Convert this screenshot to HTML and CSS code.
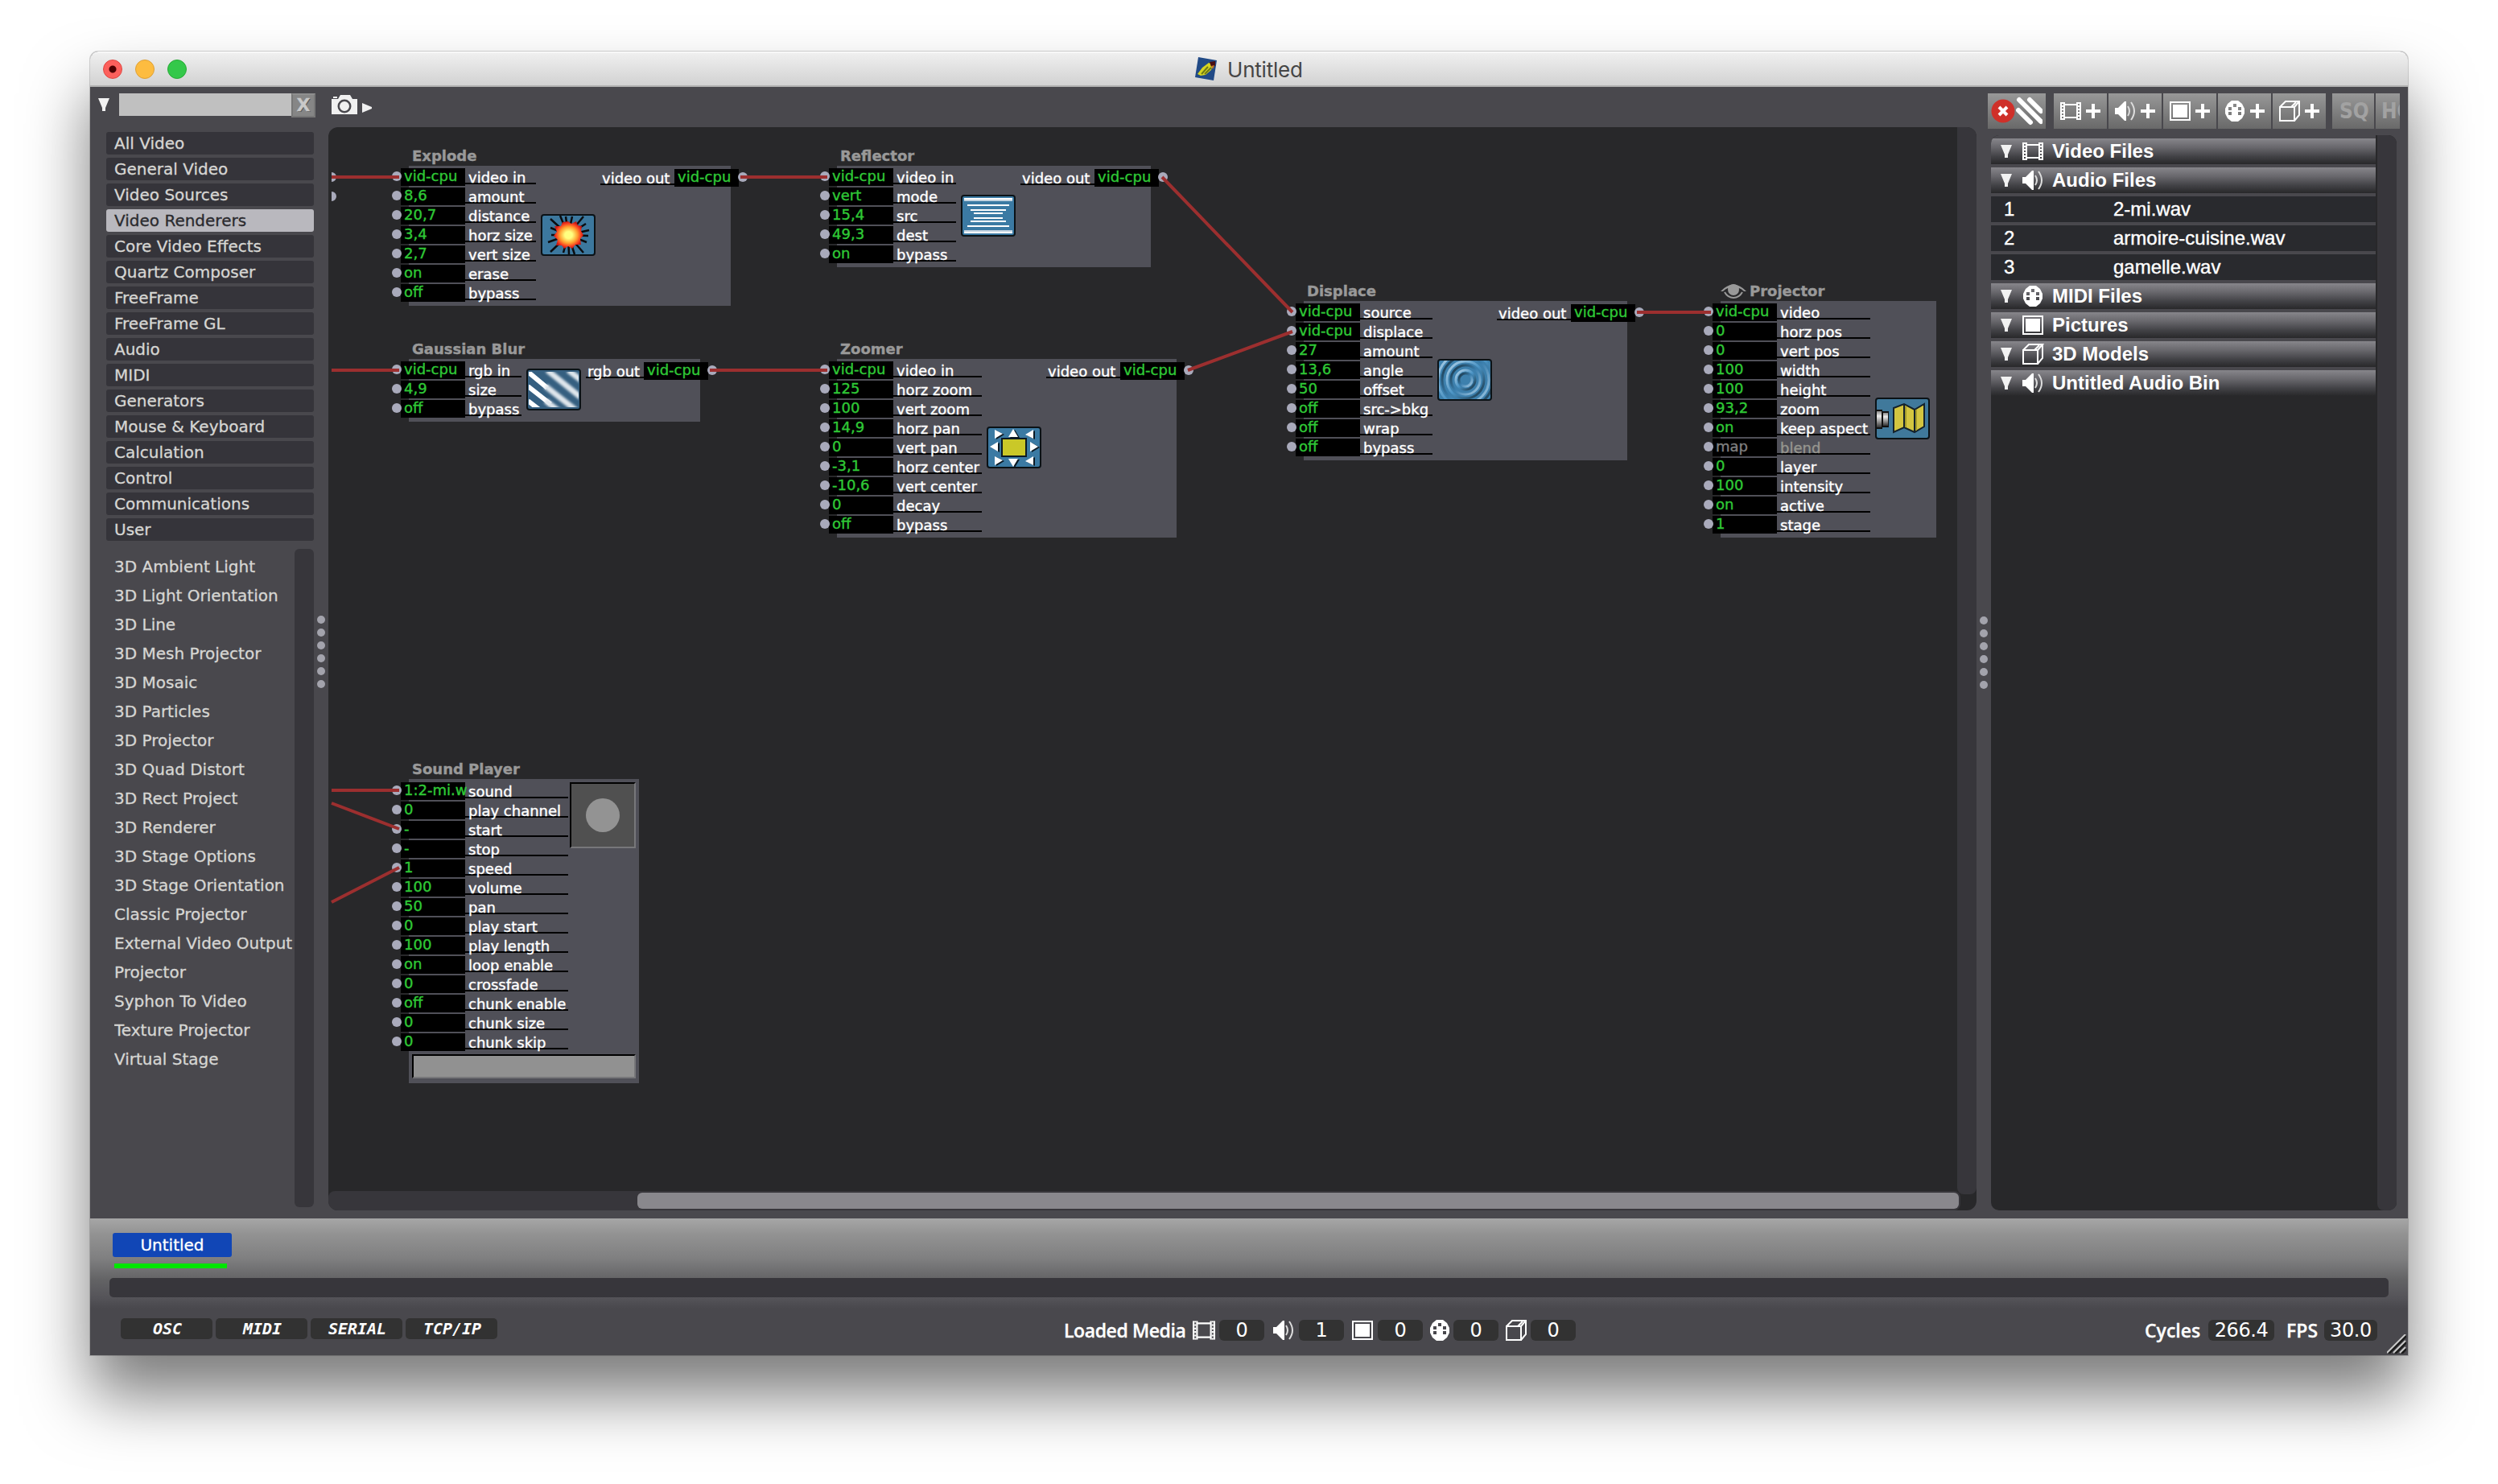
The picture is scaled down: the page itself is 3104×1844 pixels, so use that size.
FILE: index.html
```html
<!DOCTYPE html>
<html lang="en">
<head>
<meta charset="utf-8">
<title>Untitled</title>
<link rel="stylesheet" href="styles.css">
</head>
<body>
<svg class="defs" width="0" height="0">
  <symbol id="film" viewBox="0 0 26 22"><path d="M5 0V22M21 0V22M5 3H21M5 19H21" fill="none" stroke="#fff" stroke-width="2"/><path d="M1 0V22M25 0V22" stroke="#fff" stroke-width="2"/><path d="M3 0V22M23 0V22" stroke="#fff" stroke-width="2" stroke-dasharray="2 2"/></symbol>
  <symbol id="speaker" viewBox="0 0 26 26"><path d="M0 9H4L12 1H14V25H12L4 17H0Z" fill="#fff"/><path d="M16 7Q20 13 16 19M20 2Q28 13 20 24" fill="none" stroke="#ddd" stroke-width="2"/></symbol>
  <symbol id="picture" viewBox="0 0 26 24"><rect x="1" y="1" width="24" height="22" fill="none" stroke="#fff" stroke-width="2"/><rect x="4" y="4" width="18" height="16" fill="#fff"/></symbol>
  <symbol id="midi" viewBox="0 0 24 26"><path fill="#fff" fill-rule="evenodd" d="M8 0H16L21 4L24 10V16L21 22L16 26H8L3 22L0 16V10L3 4ZM10 4V8H14V4ZM4 8V12H8V8ZM16 8V12H20V8ZM4 14V18H8V14ZM16 14V18H20V14Z"/></symbol>
  <symbol id="cube" viewBox="0 0 26 26"><path d="M1 8H19V25H1ZM1 8L8 1H25L19 8M25 1V18L19 25M21 2L15 8" fill="none" stroke="#fff" stroke-width="2"/></symbol>
  <symbol id="plus" viewBox="0 0 18 18"><path d="M9 0V18M0 9H18" stroke="#fff" stroke-width="4"/></symbol>
  <symbol id="down" viewBox="0 0 14 16"><path d="M0 0H14L9 12V16H5V12Z" fill="#f2f2f2"/></symbol>
</svg>

<div class="window">
  <header class="titlebar">
    <span class="light red"></span><span class="light yellow"></span><span class="light green"></span>
    <div class="caption">
      <svg width="28" height="30" viewBox="0 0 28 30"><path d="M4 0L27 4L23 29L0 25Z" fill="#214a86"/><path d="M3 21L9 13L17 7L22 9L20 16L13 22L7 23Z" fill="#d6d421"/><path d="M8 21L16 12M12 21L20 13" stroke="#6f7a16" stroke-width="2"/><path d="M18 6L25 5V11L20 12Z" fill="#4a0f12"/><path d="M20 11L24 10L22 15Z" fill="#c87a28"/></svg>
      <span>Untitled</span>
    </div>
  </header>

  <div class="main">
    <aside class="sidebar">
      <div class="search"><svg class="tri" width="14" height="16"><use href="#down"/></svg><div class="field"></div><div class="clear">X</div></div>
      <ul class="cats">
        <li>All Video</li><li>General Video</li><li>Video Sources</li><li class="on">Video Renderers</li><li>Core Video Effects</li><li>Quartz Composer</li><li>FreeFrame</li><li>FreeFrame GL</li><li>Audio</li><li>MIDI</li><li>Generators</li><li>Mouse &amp; Keyboard</li><li>Calculation</li><li>Control</li><li>Communications</li><li>User</li>
      </ul>
      <div class="actors">
        <ul>
          <li>3D Ambient Light</li><li>3D Light Orientation</li><li>3D Line</li><li>3D Mesh Projector</li><li>3D Mosaic</li><li>3D Particles</li><li>3D Projector</li><li>3D Quad Distort</li><li>3D Rect Project</li><li>3D Renderer</li><li>3D Stage Options</li><li>3D Stage Orientation</li><li>Classic Projector</li><li>External Video Output</li><li>Projector</li><li>Syphon To Video</li><li>Texture Projector</li><li>Virtual Stage</li>
        </ul>
        <div class="track"></div>
      </div>
    </aside>
    <div class="splitter left"><i></i><i></i><i></i><i></i><i></i><i></i></div>

    <section class="editor">
      <div class="tools">
        <svg width="32" height="24" viewBox="0 0 32 24"><path fill="#f0f0f0" fill-rule="evenodd" d="M0 5H8L11 0H23L26 5H32V24H0ZM16 5.500A8.500 8.500 0 1 0 16 22.500A8.500 8.500 0 1 0 16 5.500ZM16 8A6 6 0 1 1 16 20A6 6 0 1 1 16 8ZM2 2H7V4H2Z"/></svg>
        <svg class="play" width="12" height="12" viewBox="0 0 12 12"><path d="M0 0L12 5V7L0 12Z" fill="#f0f0f0"/></svg>
      </div>
      <div class="canvas">
        <div class="node explode">
          <h3>Explode</h3>
          <div class="body">
            <div class="ports">
              <p><i></i><b>vid-cpu</b><span>video in</span></p><p><i></i><b>8,6</b><span>amount</span></p><p><i></i><b>20,7</b><span>distance</span></p><p><i></i><b>3,4</b><span>horz size</span></p><p><i></i><b>2,7</b><span>vert size</span></p><p><i></i><b>on</b><span>erase</span></p><p><i></i><b>off</b><span>bypass</span></p>
            </div>
            <svg class="icon" width="68" height="52" viewBox="0 0 68 52"><defs><radialGradient id="fire"><stop offset="0.250" stop-color="#ffff80"/><stop offset="0.600" stop-color="#ffa030"/><stop offset="0.850" stop-color="#f53a20"/><stop offset="1" stop-color="#c01812"/></radialGradient></defs><rect x="1" y="1" width="66" height="50" rx="3" fill="#3c789e" stroke="#0b1216" stroke-width="2"/><path d="M34 26L12 6M34 26L24 2M34 26L31 3M34 26L39 3M34 26L53 3M34 26L56 12M34 26L60 20M34 26L59 27M34 26L57 35M34 26L53 48M34 26L42 50M34 26L35 50M34 26L28 48M34 26L12 47M34 26L9 35M34 26L13 26M34 26L12 17" stroke="#0b0d10" stroke-width="2.500"/><path d="M34 9L38 12L44 9L46 14L51 15L50 21L53 26L49 31L50 38L43 38L39 43L34 40L29 43L26 39L19 39L21 32L16 27L20 22L17 15L25 15L27 10Z" fill="url(#fire)"/></svg>
            <div class="out"><span>video out</span><b>vid-cpu</b><i></i></div>
          </div>
        </div>
        <div class="node blur">
          <h3>Gaussian Blur</h3>
          <div class="body">
            <div class="ports">
              <p><i></i><b>vid-cpu</b><span>rgb in</span></p><p><i></i><b>4,9</b><span>size</span></p><p><i></i><b>off</b><span>bypass</span></p>
            </div>
            <svg class="icon" width="68" height="52" viewBox="0 0 68 52"><defs><clipPath id="cl"><rect x="3" y="4" width="62" height="44"/></clipPath><filter id="soft"><feGaussianBlur stdDeviation="1.800"/></filter></defs><rect x="1" y="1" width="66" height="50" rx="3" fill="#355f80" stroke="#0b1216" stroke-width="2"/><g clip-path="url(#cl)" stroke="#fff"><g stroke-width="6"><path d="M2 4L26 24M2 22L30 44M2 40L20 54"/></g><g stroke-width="7" stroke="#dfe6ec" filter="url(#soft)"><path d="M24 22L62 52M26 2L68 36M52 2L70 16M24 40L42 54"/></g></g></svg>
            <div class="out"><span>rgb out</span><b>vid-cpu</b><i></i></div>
          </div>
        </div>
        <div class="node reflector">
          <h3>Reflector</h3>
          <div class="body">
            <div class="ports">
              <p><i></i><b>vid-cpu</b><span>video in</span></p><p><i></i><b>vert</b><span>mode</span></p><p><i></i><b>15,4</b><span>src</span></p><p><i></i><b>49,3</b><span>dest</span></p><p><i></i><b>on</b><span>bypass</span></p>
            </div>
            <svg class="icon" width="68" height="52" viewBox="0 0 68 52"><rect x="1" y="1" width="66" height="50" rx="3" fill="#3b7aa3" stroke="#0b1216" stroke-width="2"/><path d="M4 7H64M4 45H64" stroke="#c5d5e2" stroke-width="2"/><path d="M4 5H64M8 13H60M12 19H56M16 23H52M16 29H52M12 33H56M8 39H60M4 47H64" stroke="#fff" stroke-width="2"/></svg>
            <div class="out"><span>video out</span><b>vid-cpu</b><i></i></div>
          </div>
        </div>
        <div class="node zoomer">
          <h3>Zoomer</h3>
          <div class="body">
            <div class="ports">
              <p><i></i><b>vid-cpu</b><span>video in</span></p><p><i></i><b>125</b><span>horz zoom</span></p><p><i></i><b>100</b><span>vert zoom</span></p><p><i></i><b>14,9</b><span>horz pan</span></p><p><i></i><b>0</b><span>vert pan</span></p><p><i></i><b>-3,1</b><span>horz center</span></p><p><i></i><b>-10,6</b><span>vert center</span></p><p><i></i><b>0</b><span>decay</span></p><p><i></i><b>off</b><span>bypass</span></p>
            </div>
            <svg class="icon" width="68" height="52" viewBox="0 0 68 52"><rect x="1" y="1" width="66" height="50" rx="3" fill="#3b7aa3" stroke="#0b1216" stroke-width="2"/><path d="M10 4L20 9L10 15ZM58 4V15L48 10ZM33 3L39 13H27ZM4 25L14 19V31ZM64 25L54 19V31ZM10 37L20 42L10 48ZM58 37V48L48 43ZM33 50L39 40H27Z" transform="translate(2 1)" fill="#0c1a24"/><path d="M10 4L20 9L10 15ZM58 4V15L48 10ZM33 3L39 13H27ZM4 25L14 19V31ZM64 25L54 19V31ZM10 37L20 42L10 48ZM58 37V48L48 43ZM33 50L39 40H27Z" fill="#fff"/><rect x="19" y="15" width="30" height="22" fill="#cac828" stroke="#0c1a24" stroke-width="2"/></svg>
            <div class="out"><span>video out</span><b>vid-cpu</b><i></i></div>
          </div>
        </div>
        <div class="node displace">
          <h3>Displace</h3>
          <div class="body">
            <div class="ports">
              <p><i></i><b>vid-cpu</b><span>source</span></p><p><i></i><b>vid-cpu</b><span>displace</span></p><p><i></i><b>27</b><span>amount</span></p><p><i></i><b>13,6</b><span>angle</span></p><p><i></i><b>50</b><span>offset</span></p><p><i></i><b>off</b><span>src-&gt;bkg</span></p><p><i></i><b>off</b><span>wrap</span></p><p><i></i><b>off</b><span>bypass</span></p>
            </div>
            <svg class="icon" width="68" height="52" viewBox="0 0 68 52"><defs><clipPath id="cd"><rect x="2" y="2" width="64" height="48"/></clipPath><linearGradient id="rip" x1="0" y1="0" x2="1" y2="1"><stop offset="0" stop-color="#b5d3e8"/><stop offset="0.500" stop-color="#4a93c4"/><stop offset="1" stop-color="#17303f"/></linearGradient><linearGradient id="rip2" x1="1" y1="1" x2="0" y2="0"><stop offset="0" stop-color="#a5cbe5"/><stop offset="0.500" stop-color="#3b7fae"/><stop offset="1" stop-color="#17303f"/></linearGradient></defs><rect x="1" y="1" width="66" height="50" rx="3" fill="#3d80ad" stroke="#0b1216" stroke-width="2"/><g clip-path="url(#cd)" fill="none" stroke-width="3"><circle cx="35" cy="26" r="8" stroke="url(#rip2)"/><circle cx="35" cy="26" r="12" stroke="url(#rip)"/><circle cx="35" cy="26" r="18" stroke="url(#rip2)"/><circle cx="35" cy="26" r="23" stroke="url(#rip)"/><circle cx="35" cy="26" r="29" stroke="url(#rip2)"/><circle cx="35" cy="26" r="34" stroke="url(#rip)"/></g></svg>
            <div class="out"><span>video out</span><b>vid-cpu</b><i></i></div>
          </div>
        </div>
        <div class="node projector">
          <h3><svg width="32" height="20" viewBox="0 0 32 20"><path d="M0 10Q16 -7 32 10L29 10Q26 7 23 6A8 8 0 0 1 9 6Q6 7 3 10Z" fill="#999"/><circle cx="16" cy="8" r="7" fill="#999"/><path d="M5 11Q9 18 16 18Q23 18 27 11" fill="none" stroke="#999" stroke-width="2"/></svg>Projector</h3>
          <div class="body">
            <div class="ports">
              <p><i></i><b>vid-cpu</b><span>video</span></p><p><i></i><b>0</b><span>horz pos</span></p><p><i></i><b>0</b><span>vert pos</span></p><p><i></i><b>100</b><span>width</span></p><p><i></i><b>100</b><span>height</span></p><p><i></i><b>93,2</b><span>zoom</span></p><p><i></i><b>on</b><span>keep aspect</span></p><p class="dim"><i></i><b>map</b><span>blend</span></p><p><i></i><b>0</b><span>layer</span></p><p><i></i><b>100</b><span>intensity</span></p><p><i></i><b>on</b><span>active</span></p><p><i></i><b>1</b><span>stage</span></p>
            </div>
            <svg class="icon" width="68" height="52" viewBox="0 0 68 52"><defs><linearGradient id="lens" x1="0" y1="0" x2="0" y2="1"><stop offset="0" stop-color="#888"/><stop offset="0.300" stop-color="#eee"/><stop offset="1" stop-color="#333"/></linearGradient></defs><rect x="1" y="1" width="66" height="50" rx="3" fill="#40799b" stroke="#0b1216" stroke-width="2"/><path d="M1 15H9V17H17V37H9V39H1Z" fill="#111"/><rect x="2" y="17" width="6" height="20" fill="url(#lens)"/><rect x="10" y="19" width="6" height="16" fill="url(#lens)"/><path d="M23 13L36 8L49 15L61 8V36L49 43L36 37L23 43Z" fill="#d3c540" stroke="#14222c" stroke-width="2"/><path d="M36 8V37M49 15V43" stroke="#14222c" stroke-width="2"/><path d="M38 10V37M51 15V41" stroke="#a39a2c" stroke-width="2"/></svg>
          </div>
        </div>
        <div class="node sound">
          <h3>Sound Player</h3>
          <div class="body">
            <div class="ports">
              <p><i></i><b>1:2-mi.w</b><span>sound</span></p><p><i></i><b>0</b><span>play channel</span></p><p><i></i><b>-</b><span>start</span></p><p><i></i><b>-</b><span>stop</span></p><p><i></i><b>1</b><span>speed</span></p><p><i></i><b>100</b><span>volume</span></p><p><i></i><b>50</b><span>pan</span></p><p><i></i><b>0</b><span>play start</span></p><p><i></i><b>100</b><span>play length</span></p><p><i></i><b>on</b><span>loop enable</span></p><p><i></i><b>0</b><span>crossfade</span></p><p><i></i><b>off</b><span>chunk enable</span></p><p><i></i><b>0</b><span>chunk size</span></p><p><i></i><b>0</b><span>chunk skip</span></p>
            </div>
            <div class="trigger"><em></em></div>
            <div class="meter"></div>
          </div>
        </div>
        <svg class="wires" width="2024" height="1320" viewBox="408 158 2024 1320">
          <path d="M412 214A6 6 0 0 1 412 226ZM412 238A6 6 0 0 1 412 250Z" fill="#a9aabb"/>
          <path d="M412 220H496M412 460H496M920 220H1028M882 460H1028M1444 220L1606 388M1476 460L1606 412M2034 388H2126M412 982H496M412 998L496 1030M412 1121L496 1078" fill="none" stroke="#9c2f2f" stroke-width="4"/>
        </svg>
        <div class="vtrack"></div>
        <div class="htrack"><div class="thumb"></div></div>
      </div>
    </section>
    <div class="splitter right"><i></i><i></i><i></i><i></i><i></i><i></i></div>

    <section class="bin">
      <div class="binbar">
        <div class="btn link"><svg width="64" height="36" viewBox="0 0 64 36"><circle cx="15" cy="18" r="14.500" fill="#cf3029"/><path d="M10 13L20 23M20 13L10 23" stroke="#fff" stroke-width="4"/><path d="M35 4L62 31M48 4L62 18M34 17L49 32" stroke="#fff" stroke-width="6" stroke-linecap="round"/></svg></div>
        <div class="btn"><svg width="26" height="22"><use href="#film"/></svg><svg width="18" height="18"><use href="#plus"/></svg></div>
        <div class="btn"><svg width="26" height="26"><use href="#speaker"/></svg><svg width="18" height="18"><use href="#plus"/></svg></div>
        <div class="btn"><svg width="26" height="24"><use href="#picture"/></svg><svg width="18" height="18"><use href="#plus"/></svg></div>
        <div class="btn"><svg width="26" height="26"><use href="#midi"/></svg><svg width="18" height="18"><use href="#plus"/></svg></div>
        <div class="btn"><svg width="26" height="26"><use href="#cube"/></svg><svg width="18" height="18"><use href="#plus"/></svg></div>
        <div class="btn sq">SQ</div><div class="btn hq">HQ</div>
      </div>
      <div class="panel">
        <div class="files">
          <div class="group"><svg width="14" height="16"><use href="#down"/></svg><svg width="28" height="22"><use href="#film"/></svg>Video Files</div>
          <div class="group"><svg width="14" height="16"><use href="#down"/></svg><svg width="28" height="26"><use href="#speaker"/></svg>Audio Files</div>
          <div class="file"><span>1</span>2-mi.wav</div>
          <div class="file"><span>2</span>armoire-cuisine.wav</div>
          <div class="file"><span>3</span>gamelle.wav</div>
          <div class="group"><svg width="14" height="16"><use href="#down"/></svg><svg width="28" height="26"><use href="#midi"/></svg>MIDI Files</div>
          <div class="group"><svg width="14" height="16"><use href="#down"/></svg><svg width="28" height="24"><use href="#picture"/></svg>Pictures</div>
          <div class="group"><svg width="14" height="16"><use href="#down"/></svg><svg width="28" height="26"><use href="#cube"/></svg>3D Models</div>
          <div class="group"><svg width="14" height="16"><use href="#down"/></svg><svg width="28" height="26"><use href="#speaker"/></svg>Untitled Audio Bin</div>
        </div>
        <div class="bintrack"></div>
      </div>
    </section>
  </div>

  <footer class="bottom">
    <div class="scene">Untitled</div>
    <div class="progress"></div>
    <div class="scenetrack"></div>
    <div class="status">
      <div class="protocols"><span>OSC</span><span>MIDI</span><span>SERIAL</span><span>TCP/IP</span></div>
      <div class="media"><strong>Loaded Media</strong>
        <svg width="28" height="24" viewBox="0 0 26 22"><use href="#film"/></svg><span>0</span>
        <svg width="28" height="26"><use href="#speaker"/></svg><span>1</span>
        <svg width="28" height="24"><use href="#picture"/></svg><span>0</span>
        <svg width="24" height="26"><use href="#midi"/></svg><span>0</span>
        <svg width="26" height="26"><use href="#cube"/></svg><span>0</span>
      </div>
      <div class="rates"><strong>Cycles</strong><span class="cy">266.4</span><strong>FPS</strong><span class="fps">30.0</span></div>
      <svg class="grip" width="24" height="24" viewBox="0 0 24 24"><path d="M2 24L24 2M10 24L24 10M18 24L24 18" stroke="#1c1c1c" stroke-width="3"/><path d="M0 23L23 0M8 23L23 8M16 23L23 16" stroke="#c9c9c9" stroke-width="2"/></svg>
    </div>
  </footer>
</div>
</body>
</html>
```
FILE: styles.css
```css
* { box-sizing: border-box; margin: 0; padding: 0; }
html, body { width: 3104px; height: 1844px; overflow: hidden; background: #fff; }
body { padding: 64px 112px 0; font: 20px/28px "DejaVu Sans", sans-serif; }
ul { list-style: none; }
svg { display: block; flex: none; }
.defs { position: absolute; }

.window {
  display: flex; flex-direction: column; width: 2880px; height: 1620px;
  background: #49484d; border-radius: 10px 10px 0 0;
  box-shadow: 0 0 0 1px rgba(0, 0, 0, .16), 0 50px 80px rgba(0, 0, 0, .52);
}

/* title bar */
.titlebar {
  display: flex; align-items: center; gap: 16px; height: 44px; padding: 0 16px;
  background: linear-gradient(#efefef, #d2d2d2); border-bottom: 2px solid #b1b1b1;
  border-top: 2px solid #f7f7f7; border-radius: 10px 10px 0 0;
}
.light { width: 24px; height: 24px; border-radius: 50%; border: 1px solid #e0443e; background: #fc605c; }
.red { background: radial-gradient(circle, #4d0000 0 4px, #fc605c 5px); }
.yellow { background: #fdbc40; border-color: #dea035; }
.green { background: #34c84a; border-color: #27aa35; }
.caption { display: flex; align-items: center; gap: 12px; margin-left: 1237px; font: 26px/40px Inter, sans-serif; letter-spacing: -.2px; color: #454545; }
.caption span { padding-top: 2px; }

.main { display: flex; height: 1406px; }

/* toolbox */
.sidebar { display: flex; flex-direction: column; width: 286px; padding-top: 8px; color: #d6d6d3; -webkit-text-stroke: .3px; }
.search { display: flex; height: 48px; padding-left: 10px; }
.tri { margin: 6px 12px 0 0; }
.field { width: 214px; height: 28px; background: #c0c0c0; }
.clear {
  width: 30px; height: 30px; background: #868686; border: 2px solid #777; border-top-color: #8f8f8f;
  font: bold 22px/26px "DejaVu Sans", sans-serif; text-align: center; color: #c9c9c9; text-shadow: 1px 1px #555;
}
.cats { display: flex; flex-direction: column; gap: 4px; width: 258px; margin-left: 20px; }
.cats li { height: 28px; padding-left: 10px; border-radius: 3px; background: #35343a; line-height: 29px; }
.cats .on { background: #b9b8be; color: #2b2b2f; }
.actors { display: flex; height: 818px; margin: 10px 0 0 20px; }
.actors ul { width: 234px; padding: 4px 2px 0 10px; }
.actors li { height: 36px; line-height: 37px; white-space: nowrap; overflow: hidden; }
.actors .track { width: 24px; border-radius: 6px; background: #37363b; }

.splitter { display: flex; flex-direction: column; align-items: center; gap: 6px; padding-top: 657px; }
.splitter i { width: 10px; height: 10px; border-radius: 50%; background: #a3a3ac; }
.left { width: 10px; padding-right: 8px; }
.right { width: 14px; padding: 658px 0 0 3px; }

/* patch editor */
.editor { width: 2048px; }
.tools { display: flex; height: 50px; padding: 10px 0 0 4px; }
.play { margin: 10px 0 0 6px; }
.canvas { position: relative; height: 1346px; background: #28282a; border-radius: 12px; overflow: hidden; }
.vtrack { position: absolute; right: 0; top: 0; width: 24px; height: 1326px; border-radius: 0 10px 8px 8px; background: #37363b; }
.htrack { position: absolute; left: 0; bottom: 0; width: 2028px; height: 24px; padding: 2px 0 2px 384px; border-radius: 8px; background: #37363b; }
.thumb { width: 1642px; height: 20px; border-radius: 6px; background: #89888d; }
.wires { position: absolute; left: 0; top: 0; }

.node { position: absolute; font-size: 18px; color: #fff; -webkit-text-stroke: .4px; }
.node h3 { display: flex; height: 22px; padding-left: 4px; font: bold 18px/20px "DejaVu Sans", sans-serif; color: #999; }
.body { position: relative; display: flex; align-items: center; background: #505058; padding: 4px 0; height: 100%; }
.ports { flex: none; margin-left: -10px; }
.node p { display: flex; height: 24px; }
.node i { flex: none; position: relative; width: 12px; height: 12px; margin: 4px -1px 0 -11px; border-radius: 50%; background: #a9aabb; }
.node b { width: 80px; height: 22px; padding-left: 4px; background: #000; color: #2fc836; font-weight: normal; line-height: 20px; white-space: nowrap; }
.node span { height: 20px; padding-left: 4px; border-bottom: 2px solid #000; line-height: 24px; white-space: nowrap; }
.node .dim { color: #96968f; }
.node .dim b { color: #7f7f7f; }
.icon { margin: -2px 0 0 6px; }
.out { position: absolute; right: -10px; top: 4px; display: flex; height: 22px; }
.out span { width: 92px; padding-left: 2px; }
.node .out i { margin: 4px -11px 0 -1px; }

.explode { left: 100px; top: 26px; width: 400px; height: 196px; }
.explode .body { height: 174px; }
.explode p span { width: 88px; }
.blur { left: 100px; top: 266px; width: 362px; }
.blur .body { height: 78px; }
.blur p span { width: 70px; }
.blur .out span { width: 72px; }
.reflector { left: 632px; top: 26px; width: 390px; }
.reflector .body { height: 126px; }
.reflector p span { width: 78px; }
.zoomer { left: 632px; top: 266px; width: 422px; }
.zoomer .body { height: 222px; }
.zoomer p span { width: 110px; }
.displace { left: 1212px; top: 194px; width: 402px; }
.displace .body { height: 198px; }
.displace p span { width: 90px; }
.projector { left: 1730px; top: 194px; width: 268px; }
.projector h3 { padding-left: 0; gap: 4px; }
.projector .body { height: 294px; }
.projector p span { width: 116px; }
.sound { left: 100px; top: 788px; width: 286px; }
.sound .body { height: 378px; align-items: flex-start; align-content: flex-start; flex-wrap: wrap; }
.sound p span { width: 128px; }
.trigger { width: 82px; height: 82px; margin-left: 2px; padding: 18px; background: #505050; border: 2px solid #77777a; border-top-color: #000; border-left-color: #000; }
.trigger em { display: block; width: 42px; height: 42px; border-radius: 50%; background: #939393; }
.meter { width: 278px; height: 30px; margin: 2px 0 0 4px; background: #919191; border: 2px solid #77777a; border-top-color: #000; border-left-color: #000; }

/* media bin */
.bin { width: 522px; padding-top: 8px; }
.binbar { display: flex; gap: 2px; width: 512px; height: 44px; overflow: hidden; }
.btn { display: flex; flex: none; align-items: center; gap: 6px; width: 66px; padding-left: 8px; background: linear-gradient(#989898, #696969); }
.link { width: 72px; margin-right: 8px; padding-left: 4px; }
.sq { width: 52px; margin-left: 6px; padding-left: 9px; font: bold 26px "DejaVu Sans Condensed", "DejaVu Sans", sans-serif; color: #a2a2a2; }
.hq { width: 52px; padding-left: 7px; font: bold 26px "DejaVu Sans Condensed", "DejaVu Sans", sans-serif; color: #a2a2a2; }
.panel { display: flex; height: 1336px; width: 504px; margin: 8px 0 0 4px; border-radius: 10px; background: #28282a; overflow: hidden; }
.files { display: flex; flex-direction: column; width: 478px; }
.group, .file { display: flex; align-items: center; height: 36px; border-top: 4px solid #49484d; font: 24px/32px "Liberation Sans", sans-serif; color: #fff; }
.group { padding-left: 12px; gap: 10px; font-weight: bold; background: linear-gradient(#87868b, #68676c 35%, #424246 70%, #28282a); }
.group svg:first-child { margin-right: 2px; }
.file { padding-left: 16px; background: #292a2e; -webkit-text-stroke: .4px; }
.file span { width: 136px; }
.bintrack { width: 24px; margin-left: 2px; background: #37363b; border-radius: 0 10px 8px 8px; }

/* scenes and status */
.bottom { height: 170px; padding-top: 18px; background: linear-gradient(#a6a6a6 0, #929292 20px, #7f7f80 50px, #636365 76px, #555459 98px, #49484d 112px); }
.scene { width: 148px; height: 30px; margin-left: 28px; border-radius: 3px; background: #1146b6; color: #fff; text-align: center; line-height: 30px; -webkit-text-stroke: .3px; }
.progress { width: 140px; height: 6px; margin: 8px 0 0 30px; background: #00e600; }
.scenetrack { width: 2832px; height: 24px; margin: 12px 0 0 24px; border-radius: 5px; background: #37363b; }
.status { position: relative; height: 72px; }
.protocols, .media, .rates { position: absolute; display: flex; align-items: center; height: 26px; color: #fff; }
.protocols { left: 38px; top: 26px; gap: 4px; }
.protocols span { width: 114px; height: 26px; padding-left: 2px; border-radius: 5px; background: #323232; font: italic bold 20px/27px "DejaVu Sans Mono", monospace; text-align: center; }
.status strong { font: 600 23px/26px "Open Sans", sans-serif; letter-spacing: -.4px; -webkit-text-stroke: .3px; }
.media { left: 1210px; top: 28px; }
.media strong { width: 160px; white-space: nowrap; }
.media svg { margin-right: 5px; }
.media span, .rates span { width: 56px; height: 26px; margin-right: 10px; border-radius: 6px; background: #323232; font-size: 24px; line-height: 26px; text-align: center; letter-spacing: -.4px; }
.media svg:nth-of-type(n+3) { margin-left: -1px; }
.rates { left: 2553px; top: 28px; }
.rates strong { width: 79px; letter-spacing: 0; }
.rates .cy { width: 82px; margin-right: 15px; }
.rates .cy + strong { width: 47px; }
.rates .fps { width: 66px; margin: 0; }
.grip { position: absolute; right: 2px; bottom: 2px; }
```
